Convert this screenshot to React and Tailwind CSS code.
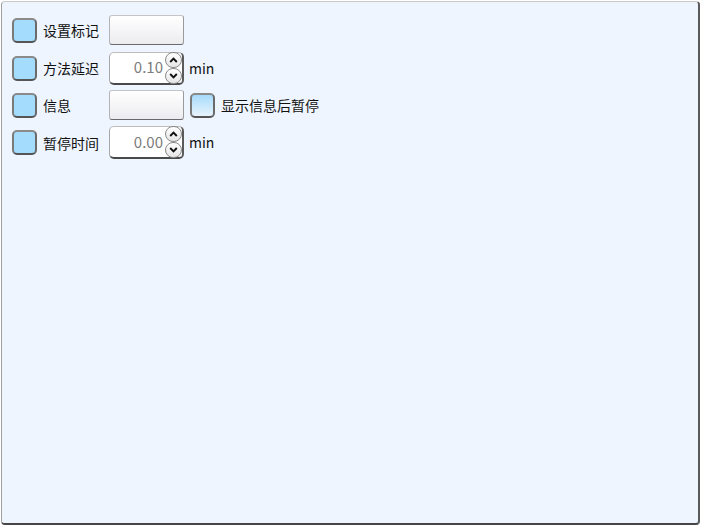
import React from 'react';

const font = { fontFamily: '"Noto Sans CJK SC", "Noto Sans", sans-serif' };

function Check({ soft }) {
  return (
    <div
      className={`w-[25px] h-[25px] shrink-0 rounded-[5px] border-2 border-t-[#8a8a8a] border-l-[#7a7a7a] border-r-[#6a6a6a] border-b-[#555] ${
        soft ? 'bg-gradient-to-b from-[#a6dbfb] to-[#e8f3fc]' : 'bg-[#a3dcfd]'
      }`}
    />
  );
}

function TextBox() {
  return (
    <div className="w-[75px] h-[30px] shrink-0 rounded-[3px] border border-t-[#c4c4c8] border-l-[#b4b4b8] border-r-[#9a9a9e] border-b-[#6a6a6e] bg-gradient-to-b from-[#ffffff] to-[#ececf0]" />
  );
}

function Spin({ up }) {
  return (
    <div className="w-[17px] h-[16px] rounded-full border border-[#8a8a8a] bg-gradient-to-b from-[#ffffff] to-[#e6e6e6] flex items-center justify-center">
      <svg width="9" height="6" viewBox="0 0 9 6">
        <path
          d={up ? 'M1.2 5 L4.5 1.6 L7.8 5' : 'M1.2 1 L4.5 4.4 L7.8 1'}
          fill="none"
          stroke="#111"
          strokeWidth="1.9"
        />
      </svg>
    </div>
  );
}

function NumBox({ value }) {
  return (
    <div className="w-[75px] h-[33px] shrink-0 rounded-[5px] border border-t-[#bdbdbd] border-l-[#a8a8a8] border-r-2 border-b-2 border-r-[#5a5a5a] border-b-[#4a4a4a] bg-white flex items-center">
      <span className="flex-1 text-right text-[15px] text-[#7c7c7c] pr-[2px]">{value}</span>
      <div className="flex flex-col">
        <Spin up />
        <Spin />
      </div>
    </div>
  );
}

function Label({ children }) {
  return <span className="w-[72px] shrink-0 text-[14px] text-[#111] leading-none pl-[6px]">{children}</span>;
}

export default function App() {
  return (
    <div className="w-[701px] h-[526px] bg-white pt-px pl-px" style={font}>
      <div className="w-[699px] h-[524px] rounded-[4px] border border-t-[#cacaca] border-l-[#a0a0a0] border-r-2 border-b-2 border-r-[#5a5a5a] border-b-[#454545] bg-[#eef5fe] pl-[10px] pt-[13px] flex flex-col">
        <div className="flex items-center h-[30px]">
          <Check />
          <Label>设置标记</Label>
          <TextBox />
        </div>
        <div className="flex items-center h-[34px] mt-[6px]">
          <Check />
          <Label>方法延迟</Label>
          <NumBox value="0.10" />
          <span className="ml-[5px] text-[14px] text-[#111]">min</span>
        </div>
        <div className="flex items-center h-[32px] mt-[4px]">
          <Check />
          <Label>信息</Label>
          <TextBox />
          <div className="ml-[6px]">
            <Check soft />
          </div>
          <span className="ml-[6px] text-[14px] text-[#111]">显示信息后暂停</span>
        </div>
        <div className="flex items-center h-[35px] mt-[4px]">
          <Check />
          <Label>暂停时间</Label>
          <NumBox value="0.00" />
          <span className="ml-[5px] text-[14px] text-[#111]">min</span>
        </div>
      </div>
    </div>
  );
}
